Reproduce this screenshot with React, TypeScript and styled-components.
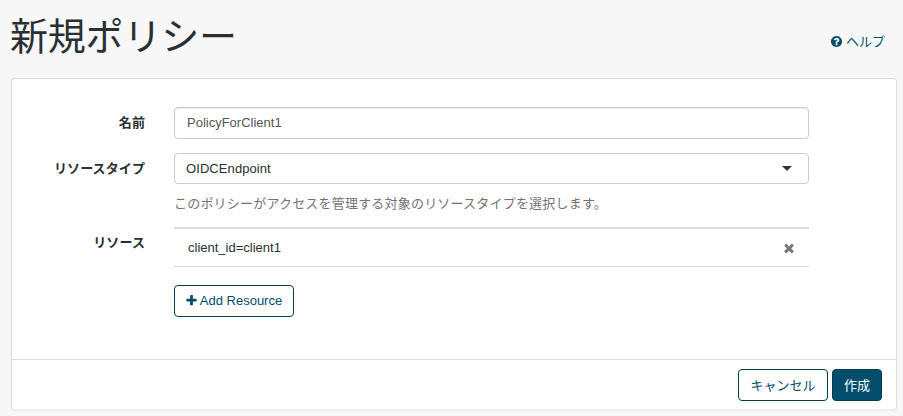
import React from "react";
import styled, { createGlobalStyle, css } from "styled-components";

const GlobalStyle = createGlobalStyle`
  *, *::before, *::after { box-sizing: border-box; }
  body {
    margin: 0;
    background: #f7f7f7;
    color: #293033;
    font: 13px/19px "Liberation Sans", "Noto Sans CJK JP", sans-serif;
    overflow: hidden;
  }
`;

const Page = styled.main`
  padding: 0 6px 0 11px;
  height: 416px;
`;

const Header = styled.header`
  display: flex;
  justify-content: space-between;
  align-items: flex-start;
  height: 78px;
  padding-right: 12px;
`;

const Title = styled.h1`
  margin: 11px 0 0 -1px;
  font-size: 38px;
  line-height: 46px;
  font-weight: 400;
  letter-spacing: -0.2px;
  white-space: nowrap;
  font-family: "Noto Sans CJK JP", sans-serif;
`;

const HelpLink = styled.a`
  display: flex;
  align-items: center;
  gap: 3px;
  margin-top: 32px;
  color: #004e6c;
`;

const Panel = styled.section`
  height: 332px;
  background: #fff;
  border: 1px solid #dcdcdc;
  border-bottom-color: #f0f0f0;
  border-radius: 4px;
  box-shadow: 0 1px 1px rgba(0, 0, 0, 0.05);
`;

const Form = styled.form`
  display: flex;
  flex-direction: column;
  height: 280px;
  padding: 28px 87px 0 12px;
`;

const Row = styled.div<{ $gap?: number }>`
  display: grid;
  grid-template-columns: 121px 635px;
  column-gap: 29px;
  margin-bottom: ${(p) => p.$gap ?? 0}px;
`;

const Label = styled.label`
  padding-top: 6px;
  text-align: right;
  font-weight: 700;
  letter-spacing: 0.1px;
`;

const field = css`
  width: 100%;
  border: 1px solid #ccc;
  border-radius: 4px;
  background: #fff;
  font: inherit;
`;

const TextInput = styled.input`
  ${field}
  height: 32px;
  padding: 0 12px 2px;
  color: #555;
  outline: none;
  box-shadow: inset 0 1px 1px rgba(0, 0, 0, 0.075);
`;

const Select = styled.div`
  ${field}
  display: flex;
  align-items: center;
  justify-content: space-between;
  height: 31px;
  padding: 0 16px 0 11px;
  letter-spacing: 0.08px;
`;

const Caret = styled.span`
  border: 5px solid transparent;
  border-top-color: #333;
  border-bottom: 0;
`;

const HelpText = styled.p`
  margin: 10px 0 0;
  color: #737373;
  letter-spacing: 0.2px;
`;

const ResourceItem = styled.div`
  display: flex;
  align-items: center;
  justify-content: space-between;
  height: 40px;
  padding: 0 13px 0 14px;
  border-top: 2px solid #ddd;
  border-bottom: 1px solid #ddd;
`;

const ResourceName = styled.span`
  padding-bottom: 1px;
`;

const Button = styled.button<{ $primary?: boolean; $width: number }>`
  display: inline-flex;
  align-items: center;
  justify-content: center;
  gap: 2px;
  width: ${(p) => p.$width}px;
  height: 32px;
  padding: 0;
  border: 1px solid #003d55;
  border-radius: 4px;
  background: ${(p) => (p.$primary ? "#004e6c" : "#fff")};
  color: ${(p) => (p.$primary ? "#fff" : "#004e6c")};
  font: inherit;
  white-space: nowrap;
`;

const AddButton = styled(Button)`
  margin-top: 18px;
  padding: 0 1px 2px 0;
`;

const Footer = styled.footer`
  display: flex;
  justify-content: flex-end;
  gap: 4px;
  padding: 9px 14px 0;
  border-top: 1px solid #ddd;
`;

const Glyph = styled.svg<{ $color?: string }>`
  display: block;
  flex: none;
  fill: ${(p) => p.$color ?? "currentColor"};
`;

const PATHS = {
  question:
    "M1024 1376v-192q0-14-9-23t-23-9h-192q-14 0-23 9t-9 23v192q0 14 9 23t23 9h192q14 0 23-9t9-23zM1280 704q0-88-55.5-163t-138.5-116-170-41q-243 0-371 213-15 24 8 42l132 100q7 6 19 6 16 0 25-12 53-68 86-92 34-24 86-24 48 0 85.5 26t37.5 59q0 38-20 61t-68 45q-63 28-115.5 86.5t-52.5 125.5v36q0 14 9 23t23 9h192q14 0 23-9t9-23q0-19 21.5-49.5t54.5-49.5q32-18 49-28.5t46-35 44.5-48 28-60.5 12.5-81zM1664 896q0 209-103 385.5t-279.5 279.5-385.5 103-385.5-103-279.5-279.5-103-385.5 103-385.5 279.5-279.5 385.5-103 385.5 103 279.5 279.5 103 385.5z",
  plus:
    "M1600 736v192q0 40-28 68t-68 28h-416v416q0 40-28 68t-68 28h-192q-40 0-68-28t-28-68v-416h-416q-40 0-68-28t-28-68v-192q0-40 28-68t68-28h416v-416q0-40 28-68t68-28h192q40 0 68 28t28 68v416h416q40 0 68 28t28 68z",
  times:
    "M1490 1322q0 40-28 68l-136 136q-28 28-68 28t-68-28l-294-294-294 294q-28 28-68 28t-68-28l-136-136q-28-28-28-68t28-68l294-294-294-294q-28-28-28-68t28-68l136-136q28-28 68-28t68 28l294 294 294-294q28-28 68-28t68 28l136 136q28 28 28 68t-28 68l-294 294 294 294q28 28 28 68z",
};

function Icon({ name, size = 13, color }: { name: keyof typeof PATHS; size?: number; color?: string }) {
  return (
    <Glyph $color={color} width={size} height={size} viewBox="0 0 1792 1792" aria-hidden="true">
      <path d={PATHS[name]} />
    </Glyph>
  );
}

export default function App() {
  return (
    <>
      <GlobalStyle />
      <Page>
        <Header>
          <Title>新規ポリシー</Title>
          <HelpLink>
            <Icon name="question" />
            ヘルプ
          </HelpLink>
        </Header>
        <Panel>
          <Form>
            <Row $gap={14}>
              <Label>名前</Label>
              <TextInput defaultValue="PolicyForClient1" />
            </Row>
            <Row $gap={14}>
              <Label>リソースタイプ</Label>
              <div>
                <Select>
                  OIDCEndpoint
                  <Caret />
                </Select>
                <HelpText>このポリシーがアクセスを管理する対象のリソースタイプを選択します。</HelpText>
              </div>
            </Row>
            <Row>
              <Label>リソース</Label>
              <div>
                <ResourceItem>
                  <ResourceName>client_id=client1</ResourceName>
                  <Icon name="times" size={14} color="#777" />
                </ResourceItem>
                <AddButton type="button" $width={120}>
                  <Icon name="plus" />
                  Add Resource
                </AddButton>
              </div>
            </Row>
          </Form>
          <Footer>
            <Button type="button" $width={90}>キャンセル</Button>
            <Button type="button" $width={50} $primary>作成</Button>
          </Footer>
        </Panel>
      </Page>
    </>
  );
}
